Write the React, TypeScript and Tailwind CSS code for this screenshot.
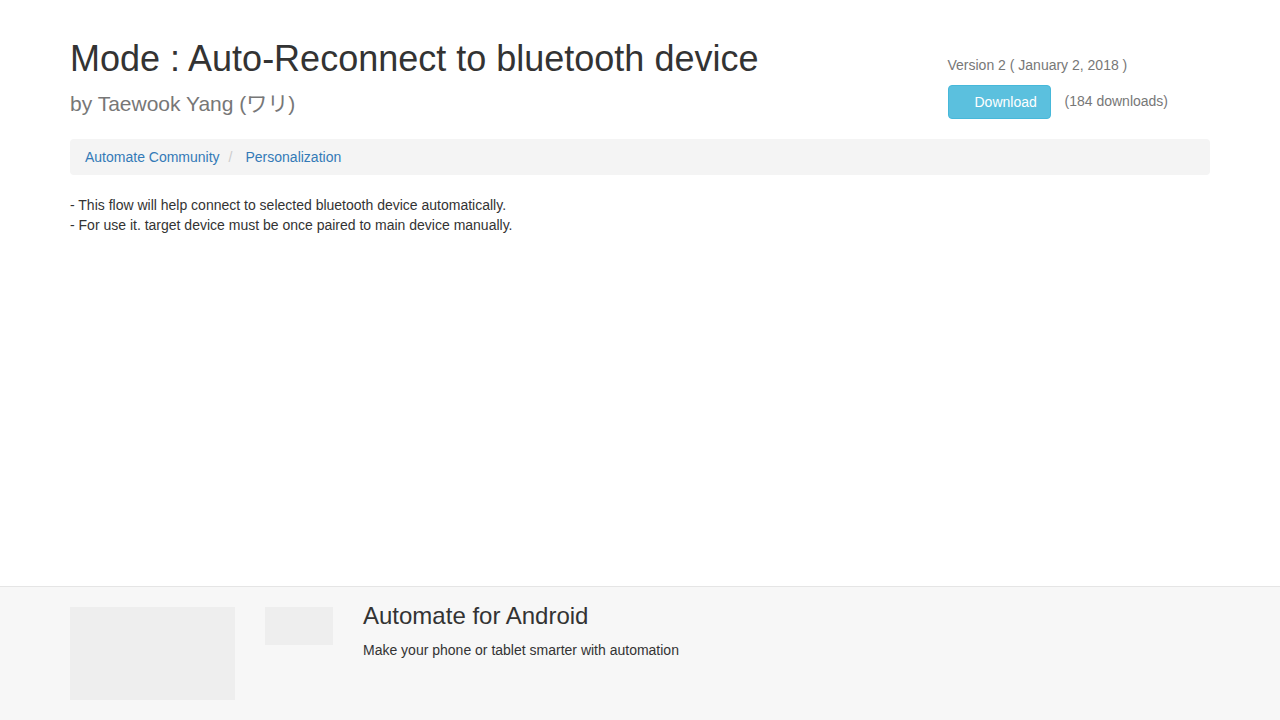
export default function App() {
  return (
    <div className="min-h-screen bg-white text-[14px] leading-[20px] text-[#333]" style={{ fontFamily: '"Liberation Sans", "Noto Sans CJK JP", Arial, sans-serif' }}>
      <div className="min-h-[586px]">
        <div className="mx-auto w-[1170px] px-[15px]">
          <div className="flex">
            <div className="w-[877.5px] pr-[15px]">
              <h1 className="mt-[39px] mb-0 text-[36px] leading-[40px] font-normal text-[#333]">
                Mode : Auto-Reconnect to bluetooth device
              </h1>
              <h3 className="mt-[13px] text-[21px] leading-[24px] text-[#777]">by Taewook Yang (ワリ)</h3>
            </div>
            <div className="flex-1 pt-[55px]">
              <p className="text-[#777]">Version 2 ( January 2, 2018 )</p>
              <div className="mt-[10px] flex items-center gap-[14px]">
                <button className="h-[34px] w-[103px] rounded-[4px] border border-[#46b8da] bg-[#5bc0de] pl-[26px] pr-[12px] text-left text-[14px] text-white">
                  Download
                </button>
                <span className="pb-[2px] text-[#777]">(184 downloads)</span>
              </div>
            </div>
          </div>

          <ol className="mt-[20px] flex h-[36px] items-center rounded-[4px] bg-[#f4f4f4] px-[15px]">
            <li>
              <a className="text-[#337ab7]" href="#">Automate Community</a>
            </li>
            <li className="flex">
              <span className="pl-[9px] pr-[13px] text-[#ccc]">/</span>
              <a className="text-[#337ab7]" href="#">Personalization</a>
            </li>
          </ol>

          <div className="mt-[20px]">
            <p>- This flow will help connect to selected bluetooth device automatically.</p>
            <p>- For use it. target device must be once paired to main device manually.</p>
          </div>
        </div>
      </div>

      <footer className="border-t border-[#e5e5e5] bg-[#f7f7f7] pb-[40px]">
        <div className="mx-auto flex w-[1170px] px-[15px] pt-[20px]">
          <div className="h-[93px] w-[165px] bg-[#eeeeee]" />
          <div className="ml-[30px] h-[38px] w-[68px] bg-[#eeeeee]" />
          <div className="ml-[30px]">
            <h3 className="-mt-[4px] text-[24px] leading-[26px] text-[#333]">Automate for Android</h3>
            <p className="mt-[11px]">Make your phone or tablet smarter with automation</p>
          </div>
        </div>
      </footer>
    </div>
  );
}
